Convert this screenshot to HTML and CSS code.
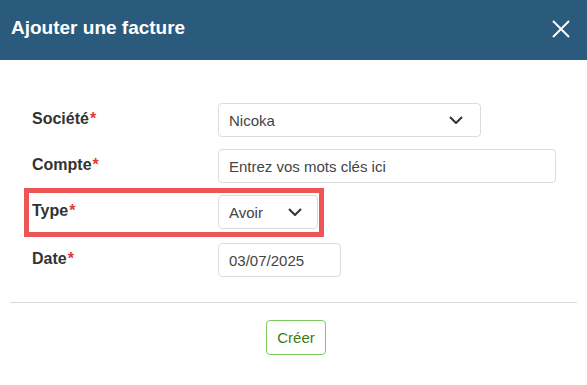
FILE: index.html
```html
<html lang="fr">
  <head>
    <meta charset="UTF-8" />
    <title>Ajouter une facture</title>
    <link rel="stylesheet" href="styles.css">
  </head>
  <body>
    <div class="modal">
      <div class="modal-header">
        <h1>Ajouter une facture</h1>
        <span class="close">
          <svg width="18" height="18" viewBox="0 0 18 18">
            <path d="M1 1 L17 17 M17 1 L1 17" stroke="#fff" stroke-width="2" fill="none" />
          </svg>
        </span>
      </div>

      <div class="modal-body">
        <div class="row">
          <label>Société<span class="req">*</span></label>
          <div class="select select-wide">
            <span>Nicoka</span>
            <svg class="chevron" width="14" height="8" viewBox="0 0 14 8">
              <path d="M1 1 L7 7 L13 1" stroke="#333" stroke-width="2" fill="none" />
            </svg>
          </div>
        </div>
        <div class="row">
          <label>Compte<span class="req">*</span></label>
          <div class="input input-full">Entrez vos mots clés ici</div>
        </div>
        <div class="row row-highlight">
          <label>Type<span class="req">*</span></label>
          <div class="select select-small">
            <span>Avoir</span>
            <svg class="chevron" width="14" height="8" viewBox="0 0 14 8">
              <path d="M1 1 L7 7 L13 1" stroke="#333" stroke-width="2" fill="none" />
            </svg>
          </div>
        </div>
        <div class="row row-date">
          <label>Date<span class="req">*</span></label>
          <div class="input input-date">03/07/2025</div>
        </div>
      </div>

      <div class="modal-footer">
        <button class="btn-create">Créer</button>
      </div>
    </div>
  </body>
</html>
```

FILE: styles.css
```css
body {
  background-color: #fff;
  color: #333;
  font-family: "Liberation Sans", Arial, sans-serif;
  margin: 0;
}

.modal {
  width: 587px;
}

.modal-header {
  align-items: center;
  background-color: #2a5a7c;
  display: flex;
  height: 60px;
  justify-content: space-between;
  padding: 0 17px 0 11px;
  box-sizing: border-box;
}

.modal-header h1 {
  color: #fff;
  font-size: 19px;
  font-weight: 700;
  margin: 0 0 4px 0;
}

.close {
  display: flex;
  margin-bottom: 2px;
}

.modal-body {
  display: flex;
  flex-direction: column;
  gap: 12px;
  padding: 43px 31px 25px 32px;
}

.row {
  align-items: center;
  display: flex;
  height: 34px;
}

.row label {
  color: #333;
  font-size: 16px;
  font-weight: 700;
  margin-bottom: 2px;
  width: 186px;
}

.req {
  color: #e53935;
  margin-left: 1px;
}

.row-highlight {
  align-self: flex-start;
  position: relative;
}

.row-highlight::after {
  border: 5px solid #ec5656;
  bottom: -8px;
  content: "";
  left: -8px;
  position: absolute;
  right: -6px;
  top: -7px;
}

.row-date {
  margin-top: 2px;
}

.select,
.input {
  align-items: center;
  border: 1px solid #dcdcdc;
  border-radius: 4px;
  box-sizing: border-box;
  color: #444;
  display: flex;
  font-size: 15px;
  height: 34px;
  padding: 0 10px;
}

.select {
  justify-content: space-between;
}

.select-wide {
  padding-right: 17px;
  width: 263px;
}

.select-small {
  padding-right: 15px;
  width: 100px;
}

.input-full {
  flex: 1;
}

.input-date {
  width: 123px;
}

.modal-footer {
  border-top: 1px solid #dadada;
  display: flex;
  justify-content: center;
  margin: 0 10px;
  padding-top: 17px;
}

.btn-create {
  background-color: #fff;
  border: 1px solid #7dcb60;
  border-radius: 4px;
  color: #3b7a1e;
  font-family: "Liberation Sans", Arial, sans-serif;
  font-size: 15px;
  height: 35px;
  margin-left: 5px;
  padding: 0 10px;
}
```
